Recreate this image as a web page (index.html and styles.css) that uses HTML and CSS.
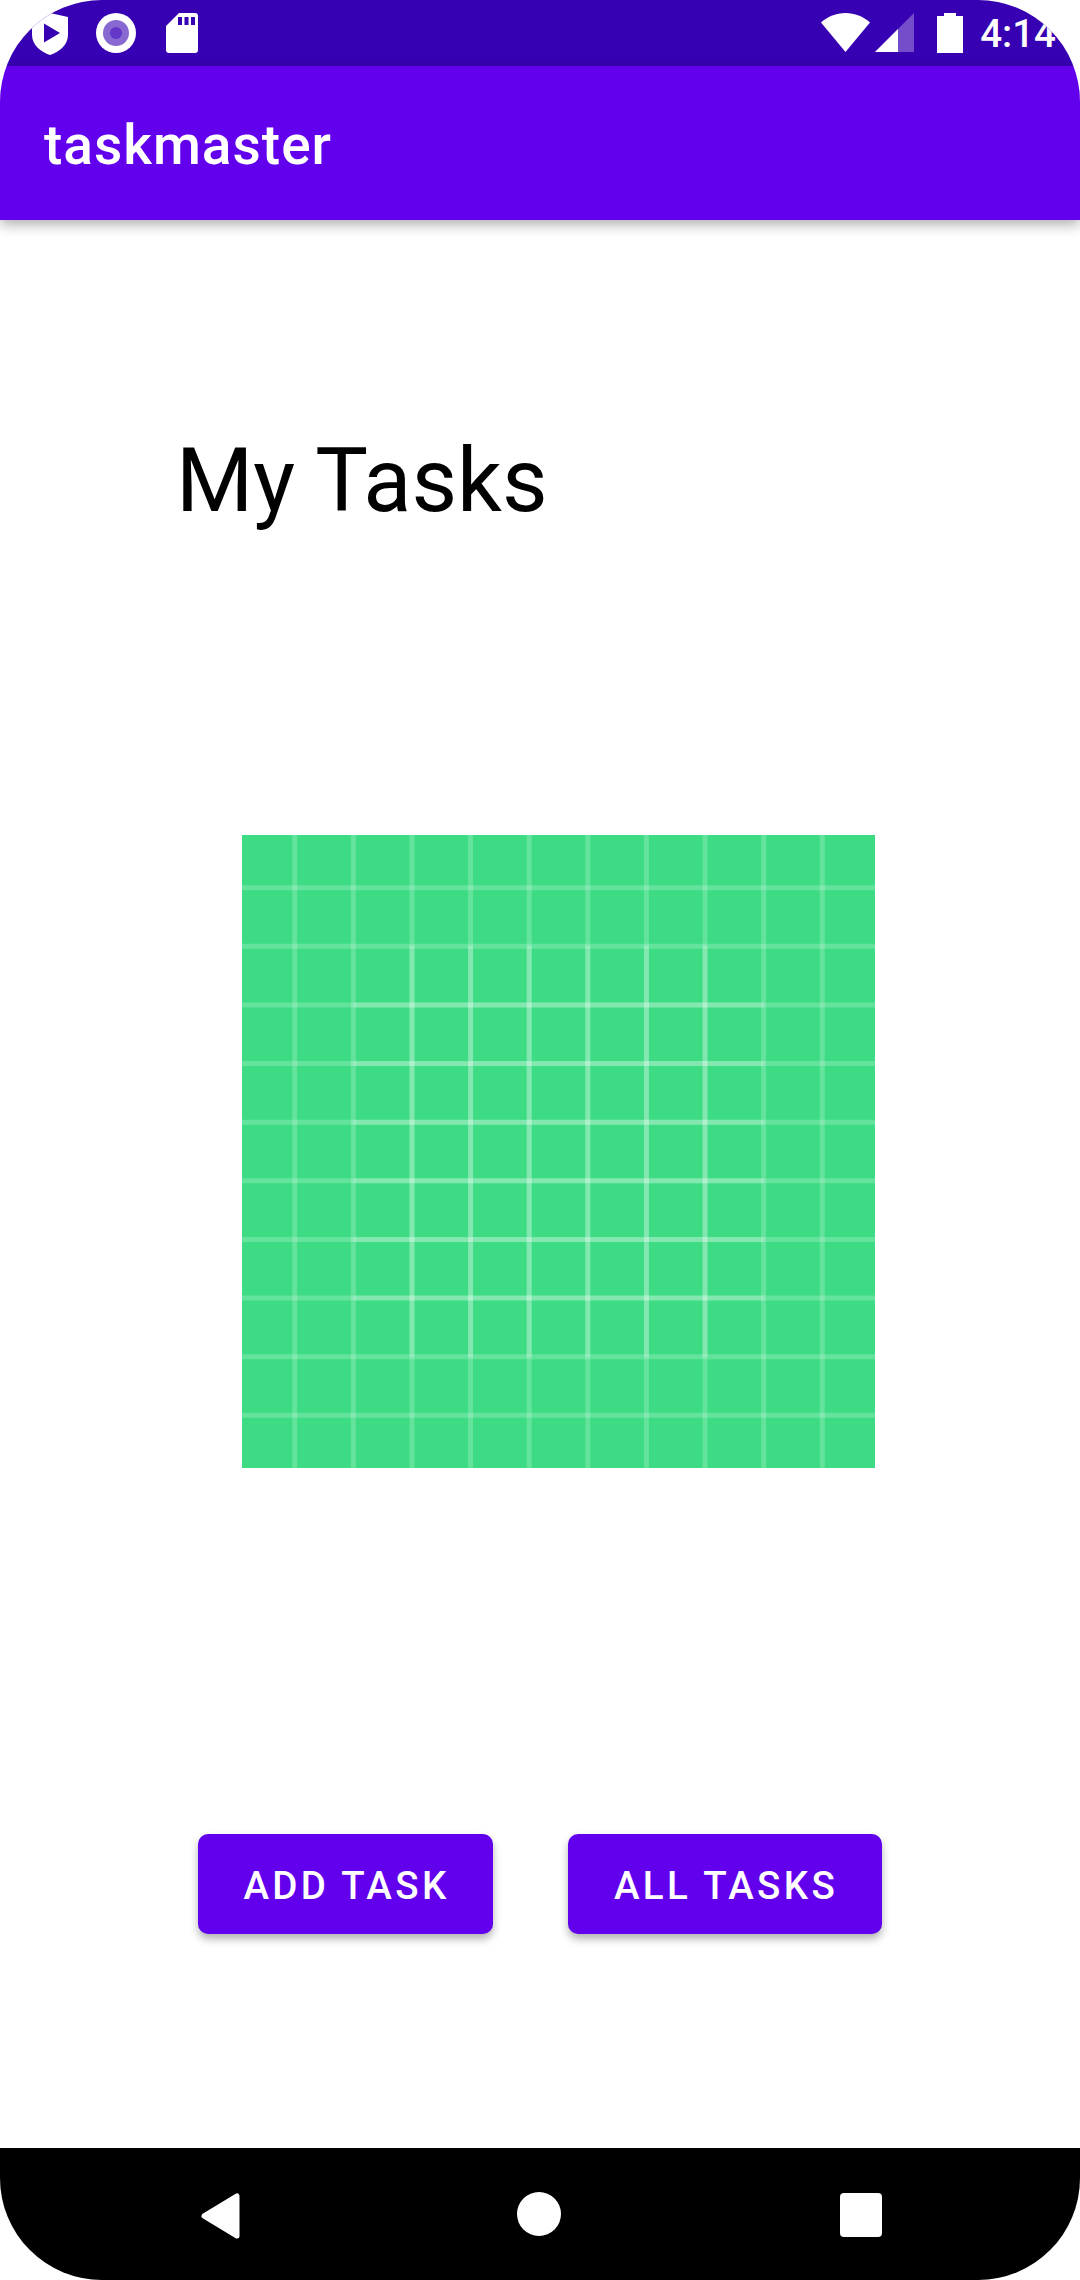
FILE: index.html
```html
<!DOCTYPE html>
<html lang="en">
<head>
<meta charset="utf-8">
<title>taskmaster</title>
<link rel="stylesheet" href="styles.css">
</head>
<body>
<div class="phone">
  <header class="status">
    <div class="status-left">
      <svg class="ic-shield" viewBox="0 0 36 42"><path class="w" d="M0 4L18 0L36 4V22C36 32 27 39 18 42C9 39 0 32 0 22Z"/><path class="dark" d="M12 10.500L28 20L12 29.500Z" stroke-linejoin="round" stroke-width="2"/></svg>
      <svg class="ic-circle" viewBox="0 0 40 40"><circle class="w" cx="20" cy="20" r="20"/><circle class="ring" cx="20" cy="20" r="13"/><circle class="core" cx="20" cy="20" r="6"/></svg>
      <svg class="ic-sd" viewBox="0 0 32 40"><path class="w" d="M13 0H29A3 3 0 0 1 32 3V37A3 3 0 0 1 29 40H3A3 3 0 0 1 0 37V13Z"/><rect class="dark" x="12" y="4" width="4" height="8"/><rect class="dark" x="18.500" y="4" width="4" height="8"/><rect class="dark" x="25" y="4" width="4" height="8"/></svg>
    </div>
    <div class="status-right">
      <svg class="ic-wifi" viewBox="0 0 49 39"><path class="w" d="M0 9.500C7 3.500 15 0 24.500 0S42 3.500 49 9.500L24.500 39Z"/></svg>
      <svg class="ic-signal" viewBox="0 0 39 39"><path class="dim" d="M39 0V39H0Z"/><path class="w" d="M23 16V39H0Z"/></svg>
      <svg class="ic-battery" viewBox="0 0 26 40"><path class="w" d="M7 0H19V3H26V40H0V3H7Z"/></svg>
      <span class="clock">4:14</span>
    </div>
  </header>
  <div class="appbar"><span class="apptitle">taskmaster</span></div>
  <main class="content">
    <h1 class="heading">My Tasks</h1>
    <svg class="grid" viewBox="0 0 108 108">
      <rect width="108" height="108" fill="#3DDC84"/>
      <g class="lines">
        <path class="gl" d="M9 0V108M19 0V108M29 0V108M39 0V108M49 0V108M59 0V108M69 0V108M79 0V108M89 0V108M99 0V108"/>
        <path class="gl" d="M0 9H108M0 19H108M0 29H108M0 39H108M0 49H108M0 59H108M0 69H108M0 79H108M0 89H108M0 99H108"/>
        <path class="gl" d="M19 29H89M19 39H89M19 49H89M19 59H89M19 69H89M19 79H89"/>
        <path class="gl" d="M29 19V89M39 19V89M49 19V89M59 19V89M69 19V89M79 19V89"/>
      </g>
    </svg>
    <div class="actions">
      <button class="btn btn-add">ADD TASK</button>
      <button class="btn btn-all">ALL TASKS</button>
    </div>
  </main>
  <nav class="navbar">
    <svg class="nav-back" viewBox="0 0 44 50"><path d="M38 5V45L5 25Z" fill="#fff" stroke="#fff" stroke-width="5" stroke-linejoin="round"/></svg>
    <svg class="nav-home" viewBox="0 0 44 46"><circle cx="22" cy="23" r="22" fill="#fff"/></svg>
    <svg class="nav-square" viewBox="0 0 42 44"><rect width="42" height="44" rx="4" fill="#fff"/></svg>
  </nav>
</div>
</body>
</html>
```
FILE: styles.css
```css
*, *::before, *::after { box-sizing: border-box; }
html, body { margin: 0; padding: 0; background: #fff; }
.phone {
  width: 1080px; height: 2280px; display: flex; flex-direction: column;
  overflow: hidden; border-radius: 102px; background: #fff;
  font-family: Roboto, "Liberation Sans", sans-serif;
}
.status {
  height: 66px; flex: none; background: #3700B3; display: flex;
  justify-content: space-between; align-items: flex-start; position: relative;
}
.status-left { display: flex; align-items: flex-start; padding: 13px 0 0 32px; }
.status-right { display: flex; align-items: flex-start; padding: 13px 24px 0 0; }
.w { fill: #fff; }
.dark { fill: #3700B3; stroke: #3700B3; stroke-width: 0; }
.ring { fill: #8769D1; }
.core { fill: #6437C9; }
.dim { fill: #fff; fill-opacity: .3; }
.ic-shield { width: 36px; height: 42px; }
.ic-circle { width: 40px; height: 40px; margin-left: 28px; }
.ic-sd { width: 32px; height: 40px; margin-left: 30px; }
.ic-wifi { width: 49px; height: 39px; }
.ic-signal { width: 39px; height: 39px; margin-left: 5px; }
.ic-battery { width: 26px; height: 40px; margin-left: 23px; }
.clock { color: #fff; font-size: 38.500px; font-weight: 500; line-height: 40px; margin-left: 17px; padding-top: 1px; }
.appbar {
  height: 154px; flex: none; background: #6200EE; display: flex; align-items: center;
  padding: 4px 0 0 44px; box-shadow: 0 5px 12px rgba(0,0,0,.3); position: relative;
}
.apptitle { color: #fff; font-size: 55px; font-weight: 500; letter-spacing: 1px; }
.content { flex: 1; display: flex; flex-direction: column; align-items: flex-start; }
.heading {
  margin: 206px 0 0 176px; font-size: 88.500px; font-weight: 400; line-height: 110px; color: #000;
}
.grid { width: 633px; height: 633px; margin: 299px 0 0 242px; display: block; }
.lines { filter: blur(.12px); }
.gl { fill: none; stroke: #fff; stroke-opacity: .2; stroke-width: .85; }
.actions { display: flex; gap: 75px; margin: 366px 0 0 198px; }
.btn {
  height: 100px; border: 0; border-radius: 10px; background: #6200EE; color: #fff; padding: 2px 0 0 2px;
  font-family: inherit; font-size: 38.500px; font-weight: 500; letter-spacing: 3.350px;
  box-shadow: 0 5px 9px rgba(0,0,0,.3);
}
.btn-add { width: 295px; }
.btn-all { width: 314px; }
.navbar {
  height: 132px; flex: none; background: #000; display: flex; align-items: flex-start;
  padding: 43px 0 0 199px;
}
.nav-back { width: 44px; height: 50px; margin-top: 0; }
.nav-home { width: 44px; height: 46px; margin-left: 274px; }
.nav-square { width: 42px; height: 44px; margin-left: 279px; margin-top: 2px; }
```
